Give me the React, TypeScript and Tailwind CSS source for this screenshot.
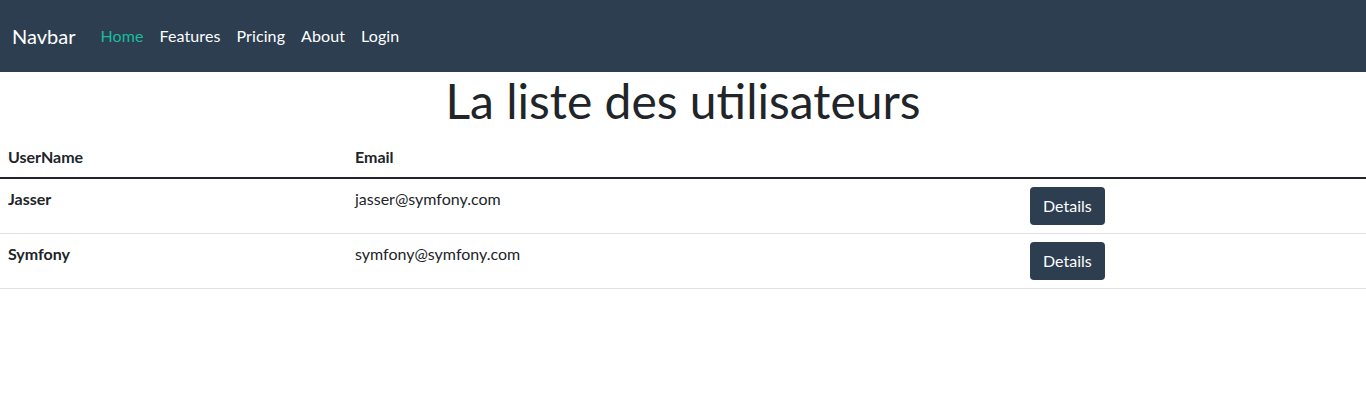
import React from 'react';

const users = [
  { name: 'Jasser', email: 'jasser@symfony.com' },
  { name: 'Symfony', email: 'symfony@symfony.com' },
];

const links = ['Home', 'Features', 'Pricing', 'About', 'Login'];

export default function App() {
  return (
    <div className="min-h-screen bg-white text-[#212529] font-['Lato','Liberation_Sans',sans-serif] text-[16px] leading-[1.5]">
      {/* NAVBAR */}
      <nav className="bg-[#2c3e50] h-[72px] flex items-center px-3">
        <a className="text-white text-[20px] mr-[17px] leading-[30px]">Navbar</a>
        <ul className="flex items-center">
          {links.map((l, i) => (
            <li key={l}>
              <a className={`px-2 py-2 block tracking-[0.1px] ${i === 0 ? 'text-[#18bc9c]' : 'text-white'}`}>{l}</a>
            </li>
          ))}
        </ul>
      </nav>

      {/* TITLE */}
      <h1 className="text-center text-[48px] leading-[57px] mb-2 font-normal">La liste des utilisateurs</h1>

      {/* TABLE */}
      <table className="w-full border-collapse align-top">
        <thead>
          <tr className="border-b-2 border-[#212529]">
            <th className="w-[347px] text-left font-bold p-2">UserName</th>
            <th className="w-[675px] text-left font-bold p-2">Email</th>
            <th className="p-2"></th>
          </tr>
        </thead>
        <tbody>
          {users.map((u) => (
            <tr key={u.email} className="border-b border-[#dee2e6]">
              <td className="p-2 font-bold align-top">{u.name}</td>
              <td className="p-2 align-top">{u.email}</td>
              <td className="p-2 align-top">
                <button className="bg-[#2c3e50] text-white rounded-[4px] px-[13px] py-[6px] leading-[1.5] text-[16px] h-[38px]">
                  Details
                </button>
              </td>
            </tr>
          ))}
        </tbody>
      </table>
    </div>
  );
}
